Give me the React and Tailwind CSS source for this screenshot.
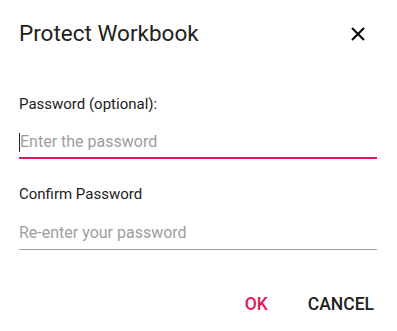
import React from "react";

const App = () => {
  return (
    <div className="w-[397px] h-[331px] bg-white text-[#212121] overflow-hidden pt-[18px]" style={{ fontFamily: "Roboto, 'Noto Sans', sans-serif" }}>
      {/* Header */}
      <div className="flex items-center justify-between pl-[19px] pr-[30px] h-[30px]">
        <h2 className="text-[22.5px] leading-[30px] font-normal text-[#212121]">Protect Workbook</h2>
        <button className="w-[18px] h-[18px] flex items-center justify-center mt-[2px]">
          <svg width="16" height="16" viewBox="0 0 16 16" fill="none" stroke="#000" strokeWidth="2">
            <path d="M2 2L14 14M14 2L2 14" />
          </svg>
        </button>
      </div>

      {/* Content */}
      <div className="pl-[19px] pr-[20px] pt-[46px]">
        <label className="block text-[15px] leading-[20px] text-[#212121]">Password (optional):</label>
        <div className="mt-[13px] border-b-2 border-[#e3165b] h-[32px] flex items-center">
          <span className="w-px h-[19px] bg-[#212121]"></span>
          <input
            type="password"
            placeholder="Enter the password"
            className="w-full outline-none text-[16px] leading-[30px] placeholder:text-[#9e9e9e] bg-transparent"
          />
        </div>

        <label className="block mt-[25px] text-[15px] leading-[20px] text-[#212121]">Confirm Password</label>
        <div className="mt-[12px] border-b border-[#9e9e9e] h-[34px] flex items-center">
          <input
            type="password"
            placeholder="Re-enter your password"
            className="w-full outline-none text-[16px] leading-[30px] placeholder:text-[#9e9e9e] bg-transparent"
          />
        </div>
      </div>

      {/* Footer */}
      <div className="flex justify-end items-center gap-[40px] pr-[23px] mt-[42px]">
        <button className="text-[17.5px] font-medium text-[#e3165b] leading-[24px]">OK</button>
        <button className="text-[17.5px] font-medium text-[#212121] leading-[24px]">CANCEL</button>
      </div>
    </div>
  );
};

export default App;
